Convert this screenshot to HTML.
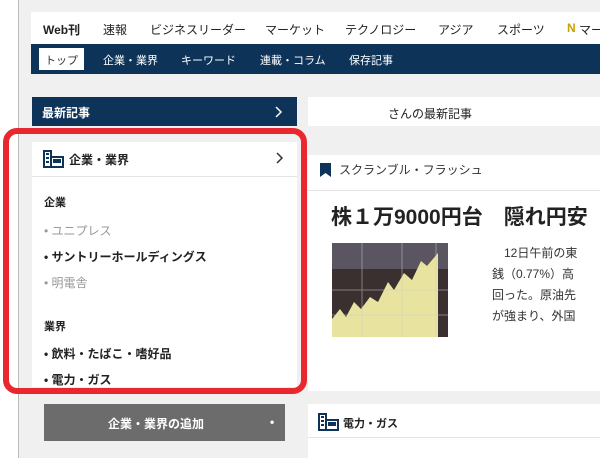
<!DOCTYPE html><html><head><meta charset="utf-8"><style>
*{margin:0;padding:0;box-sizing:border-box}
body{width:600px;height:458px;overflow:hidden;background:#fff;font-family:"Liberation Sans","Noto Sans CJK JP",sans-serif;position:relative;color:#222}
.a{position:absolute}
.bg{left:18px;top:0;width:582px;height:458px;background:#f0f0f0;border-left:1px solid #bbb}
.nav{left:31px;top:12px;width:569px;height:32px;background:#fff;font-size:12px;white-space:nowrap}
.nav span{position:absolute;top:9px}
.bar{left:31px;top:44px;width:569px;height:30px;background:#0e3358;color:#fff;font-size:11px;white-space:nowrap}
.bar span{position:absolute;top:8px}
</style></head><body>
<div class="a bg"></div>
<div class="a nav">
<span style="left:12px;font-weight:bold">Web刊</span><span style="left:72px">速報</span><span style="left:119px">ビジネスリーダー</span><span style="left:234px">マーケット</span><span style="left:314px">テクノロジー</span><span style="left:407px">アジア</span><span style="left:466px">スポーツ</span><span style="left:536px;color:#c8a000;font-weight:bold">N</span><span style="left:548px">マーケ</span></div>
<div class="a bar">
<div class="a" style="left:8px;top:4px;width:45px;height:22px;background:#fff"></div>
<span style="left:14px;color:#333">トップ</span><span style="left:72px">企業・業界</span><span style="left:150px">キーワード</span><span style="left:229px">連載・コラム</span><span style="left:318px">保存記事</span></div>
<div class="a" style="left:32px;top:97px;width:265px;height:29px;background:#0e3358;color:#fff;font-size:12px;font-weight:bold"><span class="a" style="left:10px;top:7px">最新記事</span><svg class="a" style="left:243px;top:9px" width="8" height="12"><path d="M1 1l5 5-5 5" fill="none" stroke="#fff" stroke-width="1.5"/></svg></div>
<div class="a" style="left:308px;top:97px;width:292px;height:29px;background:#fff;font-size:12px"><span class="a" style="left:80px;top:8px">さんの最新記事</span></div>
<div class="a" style="left:32px;top:142px;width:265px;height:245px;background:#fff"></div>
<div class="a" style="left:32px;top:176px;width:265px;height:1px;background:#e4e4e4"></div>
<svg class="a" style="left:43px;top:150px" width="22" height="18"><path d="M1 1h7v16H1zM8 7h12v10H8zM3 4h3M3 8h3M3 12h3M11 10h2v2h-2zM15 10h2v2h-2z" fill="none" stroke="#0e3358" stroke-width="2"/></svg>
<div class="a" style="left:69px;top:151px;font-size:12px;font-weight:bold">企業・業界</div>
<svg class="a" style="left:276px;top:152px" width="8" height="12"><path d="M1 1l5 5-5 5" fill="none" stroke="#333" stroke-width="1.5"/></svg>
<div class="a" style="left:44px;top:194px;font-size:11px;font-weight:bold">企業</div>
<div class="a" style="left:44px;top:222px;font-size:12px;color:#999">• ユニプレス</div>
<div class="a" style="left:44px;top:248px;font-size:12px;font-weight:bold">• サントリーホールディングス</div>
<div class="a" style="left:44px;top:274px;font-size:12px;color:#999">• 明電舎</div>
<div class="a" style="left:44px;top:318px;font-size:11px;font-weight:bold">業界</div>
<div class="a" style="left:44px;top:345px;font-size:12px;font-weight:bold">• 飲料・たばこ・嗜好品</div>
<div class="a" style="left:44px;top:371px;font-size:12px;font-weight:bold">• 電力・ガス</div>
<div class="a" style="left:3px;top:128px;width:304px;height:266px;border:6px solid #e8282e;border-radius:14px"></div>
<div class="a" style="left:44px;top:404px;width:241px;height:37px;background:#6c6c6c;color:#fff;font-size:12px;font-weight:bold"><span class="a" style="left:64px;top:11px">企業・業界の追加</span><span class="a" style="left:226px;top:11px">•</span></div>
<div class="a" style="left:308px;top:155px;width:292px;height:236px;background:#fff"></div>
<div class="a" style="left:308px;top:190px;width:292px;height:1px;background:#e4e4e4"></div>
<svg class="a" style="left:320px;top:163px" width="12" height="14"><path d="M0 0h11v14l-5.5-4L0 14z" fill="#0e3358"/></svg>
<div class="a" style="left:339px;top:161px;font-size:12px;color:#333">スクランブル・フラッシュ</div>
<div class="a" style="left:331px;top:201px;font-size:21px;font-weight:bold;white-space:nowrap">株１万9000円台　隠れ円安</div>
<svg class="a" style="left:332px;top:243px" width="116" height="94"><rect width="116" height="94" fill="#3a3030"/><rect x="0" y="0" width="116" height="26" fill="#5a5560"/><path d="M0 94V76l8-10 6 8 8-15 7 7 9-12 8 5 10-20 6 8 10-17 8 7 9-19 6 5 11-13v94z" fill="#e8e4a0"/><path d="M30 0v94M70 0v94M104 0v94M0 47h116M0 72h116" stroke="#ccc" stroke-width="1" opacity=".5"/></svg>
<div class="a" style="left:492px;top:243px;font-size:12px;line-height:21px;color:#333;white-space:nowrap">　12日午前の東<br>銭（0.77%）高<br>回った。原油先<br>が強まり、外国</div>
<div class="a" style="left:308px;top:404px;width:292px;height:54px;background:#fff"></div>
<div class="a" style="left:308px;top:437px;width:292px;height:1px;background:#e4e4e4"></div>
<svg class="a" style="left:318px;top:413px" width="22" height="18"><path d="M1 1h7v16H1zM8 7h12v10H8zM3 4h3M3 8h3M3 12h3M11 10h2v2h-2zM15 10h2v2h-2z" fill="none" stroke="#0e3358" stroke-width="2"/></svg>
<div class="a" style="left:343px;top:415px;font-size:11px;font-weight:bold">電力・ガス</div>
</body></html>
